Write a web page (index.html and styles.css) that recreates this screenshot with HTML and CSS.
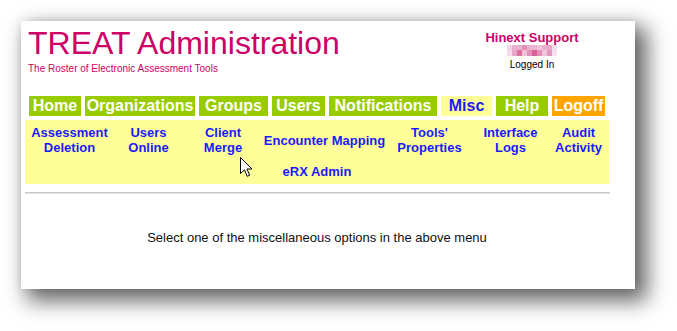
FILE: index.html
```html
<!DOCTYPE html>
<html lang="en">
<head>
<meta charset="utf-8">
<title>TREAT Administration</title>
<link rel="stylesheet" href="styles.css">
</head>
<body>
<div class="window">
  <header class="header">
    <div class="brand">
      <h1 class="title">TREAT Administration</h1>
      <div class="tagline">The Roster of Electronic Assessment Tools</div>
    </div>
    <div class="user">
      <div class="user-name">Hinext Support</div>
      <svg class="redacted" width="50" height="11" viewBox="0 0 50 11">
        <rect x="0" y="0" width="5" height="5" fill="#f3d3e1"/>
        <rect x="5" y="0" width="5" height="5" fill="#eab0cc"/>
        <rect x="10" y="0" width="5" height="5" fill="#eab0cc"/>
        <rect x="15" y="0" width="5" height="5" fill="#e48fb8"/>
        <rect x="20" y="0" width="5" height="5" fill="#eab0cc"/>
        <rect x="25" y="0" width="5" height="5" fill="#ecb8d0"/>
        <rect x="30" y="0" width="5" height="5" fill="#f0c4d8"/>
        <rect x="35" y="0" width="5" height="5" fill="#eab0cc"/>
        <rect x="40" y="0" width="5" height="5" fill="#e8a8c8"/>
        <rect x="45" y="0" width="5" height="5" fill="#f4dcea"/>
        <rect x="0" y="5" width="5" height="6" fill="#f4dcea"/>
        <rect x="5" y="5" width="5" height="6" fill="#e8a8c8"/>
        <rect x="10" y="5" width="5" height="6" fill="#dc6fa4"/>
        <rect x="15" y="5" width="5" height="6" fill="#f0c4d8"/>
        <rect x="20" y="5" width="5" height="6" fill="#e48fb8"/>
        <rect x="25" y="5" width="5" height="6" fill="#d9609b"/>
        <rect x="30" y="5" width="5" height="6" fill="#e48fb8"/>
        <rect x="35" y="5" width="5" height="6" fill="#f0c4d8"/>
        <rect x="40" y="5" width="5" height="6" fill="#e099be"/>
        <rect x="45" y="5" width="5" height="6" fill="#f6e2ee"/>
      </svg>
      <div class="user-status">Logged In</div>
    </div>
  </header>

  <div class="main">
    <nav class="nav">
      <a class="tab">Home</a>
      <a class="tab">Organizations</a>
      <a class="tab">Groups</a>
      <a class="tab">Users</a>
      <a class="tab">Notifications</a>
      <a class="tab tab-active">Misc</a>
      <a class="tab">Help</a>
      <a class="tab tab-logoff">Logoff</a>
    </nav>

    <div class="submenu">
      <div class="sub-row">
        <a class="sub-item">Assessment<br>Deletion</a>
        <a class="sub-item">Users<br>Online</a>
        <a class="sub-item">Client<br>Merge</a>
        <a class="sub-item">Encounter Mapping</a>
        <a class="sub-item">Tools'<br>Properties</a>
        <a class="sub-item">Interface<br>Logs</a>
        <a class="sub-item">Audit<br>Activity</a>
      </div>
      <div class="sub-row-wide">
        <a class="sub-item">eRX Admin</a>
      </div>
    </div>

    <div class="rule"></div>

    <p class="message">Select one of the miscellaneous options in the above menu</p>
  </div>

  <svg class="cursor" width="13" height="21" viewBox="0 0 13 21">
    <path d="M0.5 0.5 L0.5 16.5 L4.5 12.8 L7.2 19.3 L9.6 18.3 L7 12 L12 12 Z" fill="#ffffff" stroke="#000000" stroke-width="1" stroke-linejoin="miter"/>
  </svg>
</div>
</body>
</html>
```

FILE: styles.css
```css
html, body {
  margin: 0;
  padding: 0;
  background: #ffffff;
}

body {
  font-family: "Liberation Sans", Arial, sans-serif;
  color: #000000;
  min-height: 331px;
  padding-top: 21px;
  padding-left: 21px;
  box-sizing: border-box;
}

.window {
  position: relative;
  width: 614px;
  height: 268px;
  background: #ffffff;
  box-shadow: 9px 9px 20px 3px rgba(0, 0, 0, 0.6), 0 0 8px rgba(0, 0, 0, 0.08);
}

.header {
  display: flex;
  justify-content: space-between;
  align-items: flex-start;
  padding: 6px 43px 0 7px;
}

.title {
  margin: 0;
  font-size: 32px;
  line-height: 32px;
  font-weight: normal;
  color: #cc0066;
}

.tagline {
  margin-top: 4px;
  font-size: 10px;
  line-height: 12px;
  color: #cc0066;
}

.user {
  width: 120px;
  margin-top: 3px;
  display: flex;
  flex-direction: column;
  align-items: center;
}

.user-name {
  font-size: 13px;
  line-height: 15px;
  font-weight: bold;
  color: #cc0066;
}

.redacted {
  display: block;
}

.user-status {
  margin-top: 3px;
  font-size: 10px;
  line-height: 12px;
  color: #000000;
}

.main {
  margin-top: 21px;
  padding-left: 4px;
  width: 585px;
}

.nav {
  display: grid;
  grid-template-columns: 52px 110px 69px 53px 108px 51px 52px 53px;
  column-gap: 4px;
  padding: 0 4px;
  width: 576px;
}

.tab {
  display: block;
  height: 20px;
  line-height: 20px;
  font-size: 16px;
  font-weight: bold;
  text-align: center;
  color: #ffffff;
  background: #99cc00;
  white-space: nowrap;
  cursor: pointer;
}

.tab-active {
  background: #ffff99;
  color: #1a1aff;
}

.tab-logoff {
  background: #ffa500;
}

.submenu {
  margin-top: 4px;
  width: 584px;
  padding: 5px 0;
  background: #ffff99;
}

.sub-row {
  display: grid;
  grid-template-columns: 89px 69px 80px 123px 87px 75px 61px;
  align-items: center;
}

.sub-row-wide {
  margin-top: 9px;
  text-align: center;
}

.sub-item {
  display: block;
  font-size: 13px;
  line-height: 15px;
  font-weight: bold;
  text-align: center;
  color: #1a1aff;
  white-space: nowrap;
  cursor: pointer;
}

.rule {
  margin-top: 8px;
  width: 585px;
  height: 0;
  border-top: 1px solid #c8c8c8;
  border-bottom: 1px solid #e4e4e4;
}

.message {
  margin: 36px 0 0 0;
  width: 584px;
  font-size: 13px;
  line-height: 15px;
  text-align: center;
  color: #111111;
}

.cursor {
  position: absolute;
  left: 219px;
  top: 136px;
}
```
